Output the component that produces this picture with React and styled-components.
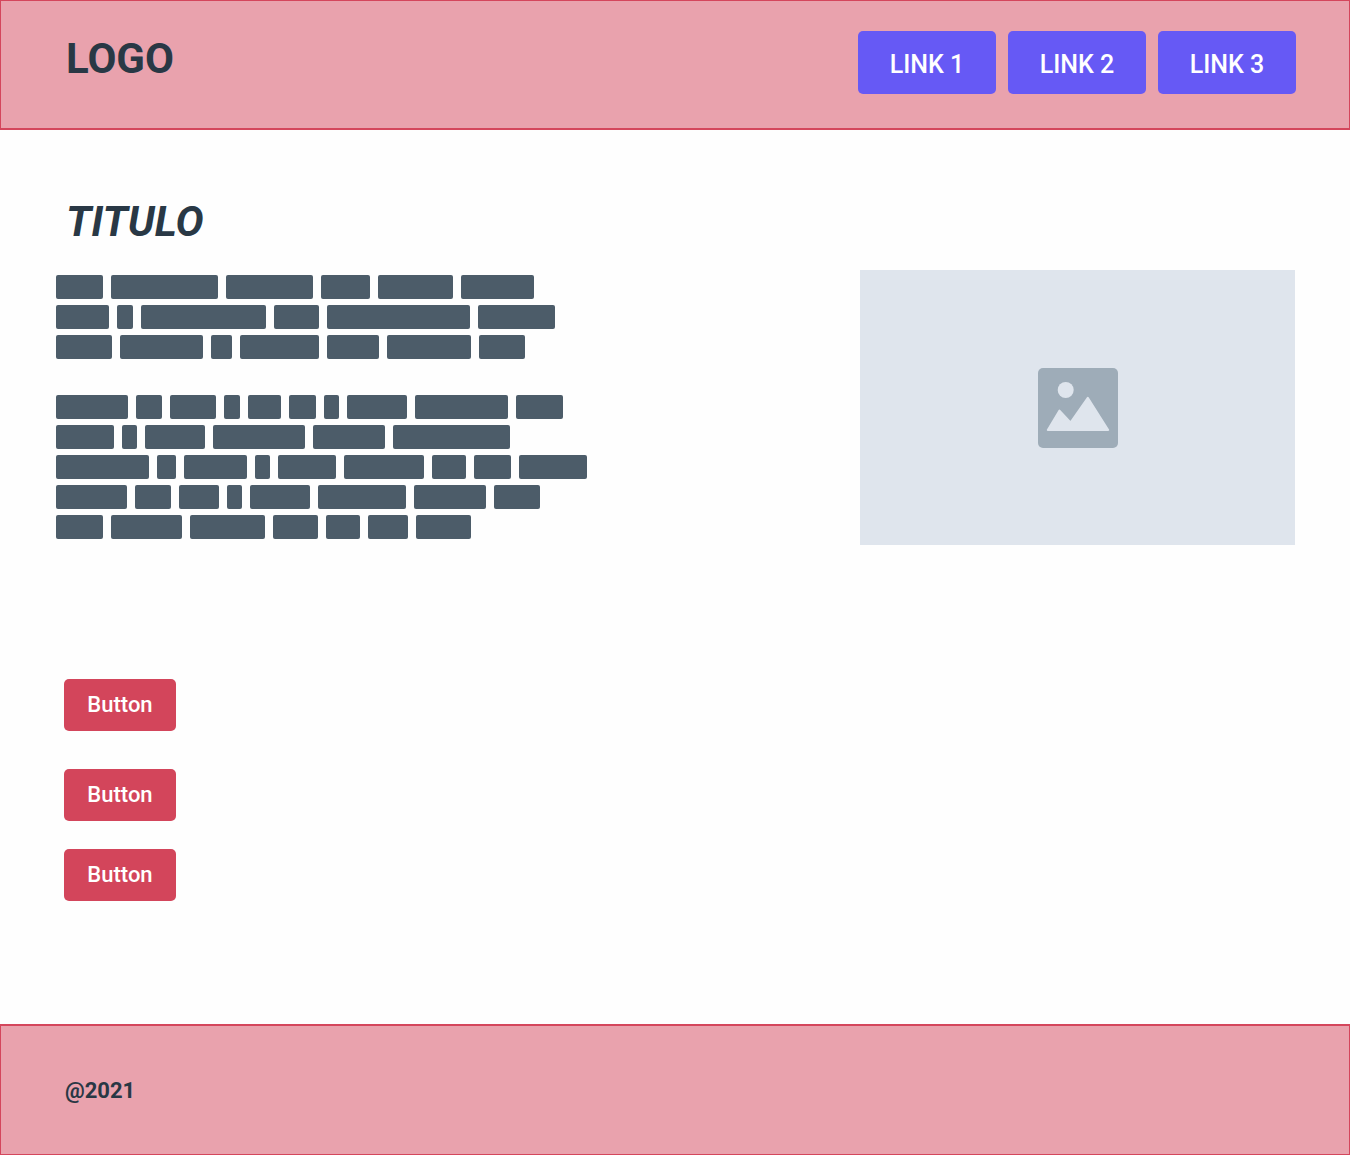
import React from "react";
import styled, { createGlobalStyle } from "styled-components";

const GlobalStyle = createGlobalStyle`
  *, *::before, *::after { box-sizing: border-box; }
  body {
    margin: 0;
    background: #fefefe;
    color: #293845;
    font-family: Roboto, "Open Sans", sans-serif;
  }
`;

const Page = styled.div`
  display: flex;
  flex-direction: column;
  min-height: 100vh;
`;

const Header = styled.header`
  display: flex;
  flex-wrap: wrap;
  align-items: flex-start;
  justify-content: space-between;
  gap: 12px;
  padding: 30px 53px 34px 65px;
  background: #e9a2ad;
  border: 1px solid #d4465c;
  border-bottom-width: 2px;
`;

const Logo = styled.span`
  font-size: 42px;
  line-height: 56px;
  font-weight: 700;
`;

const Nav = styled.nav`
  display: flex;
  flex-wrap: wrap;
  gap: 12px;
`;

const NavLink = styled.a`
  display: flex;
  align-items: center;
  justify-content: center;
  min-width: 138px;
  padding: 19px 24px 14px;
  border-radius: 5px;
  background: #6659f5;
  color: #ffffff;
  font-size: 25px;
  line-height: 30px;
  font-weight: 500;
  text-decoration: none;
`;

const Main = styled.main`
  flex: 1;
  padding: 68px 55px 64px 56px;
`;

const Title = styled.h1`
  margin: 0 0 24px;
  padding-left: 10px;
  font-size: 42px;
  line-height: 48px;
  font-weight: 700;
  font-style: italic;
`;

const Intro = styled.section`
  display: flex;
  flex-wrap: wrap;
  align-items: flex-start;
  justify-content: space-between;
  gap: 24px;
`;

const Copy = styled.div`
  display: grid;
  gap: 36px;
  padding-top: 5px;
`;

const Paragraph = styled.div`
  display: grid;
  gap: 6px;
`;

const Line = styled.div`
  display: flex;
  gap: 8px;
`;

const Word = styled.span`
  height: 24px;
  border-radius: 2px;
  background: #4c5c69;
`;

const Picture = styled.div`
  display: flex;
  align-items: center;
  justify-content: center;
  width: 435px;
  max-width: 100%;
  height: 275px;
  background: #dfe5ed;
`;

const Actions = styled.div`
  display: flex;
  flex-direction: column;
  align-items: flex-start;
  gap: 28px;
  padding: 134px 8px 0;
`;

const Button = styled.button`
  min-width: 112px;
  margin: 0 0 ${(p) => (p.$spaced ? "10px" : "0")};
  padding: 12px 16px;
  border: 0;
  border-radius: 5px;
  background: #d3455b;
  color: #ffffff;
  font-family: inherit;
  font-size: 22px;
  line-height: 28px;
  font-weight: 500;
`;

const Footer = styled.footer`
  padding: 51px 64px 49px;
  background: #e9a2ad;
  border: 1px solid #d4465c;
  border-top-width: 2px;
  font-size: 22px;
  line-height: 28px;
  font-weight: 700;
`;

const links = ["LINK 1", "LINK 2", "LINK 3"];

// Word widths of each placeholder line, grouped by paragraph.
const paragraphs = [
  [
    [47, 107, 87, 49, 75, 73],
    [53, 16, 125, 45, 143, 77],
    [56, 83, 21, 79, 52, 84, 46],
  ],
  [
    [72, 26, 46, 16, 33, 27, 15, 60, 93, 47],
    [58, 15, 60, 92, 72, 117],
    [93, 19, 63, 15, 58, 80, 34, 37, 68],
    [71, 36, 40, 15, 60, 88, 72, 46],
    [47, 71, 75, 45, 34, 40, 55],
  ],
];

function ImageIcon() {
  return (
    <svg width="80" height="80" viewBox="0 0 80 80" aria-hidden="true">
      <rect width="80" height="80" rx="5" fill="#9eacb8" />
      <g fill="#dfe5ed">
        <circle cx="27.7" cy="22" r="8" />
        <path
          d="M9.800 62 21.500 42.600 32.500 54.500 49.800 29.800 70.200 62Z"
          stroke="#dfe5ed"
          strokeWidth="2"
          strokeLinejoin="round"
        />
      </g>
    </svg>
  );
}

export default function App() {
  return (
    <Page>
      <GlobalStyle />
      <Header>
        <Logo>LOGO</Logo>
        <Nav>
          {links.map((label) => (
            <NavLink key={label} href="#">
              {label}
            </NavLink>
          ))}
        </Nav>
      </Header>
      <Main>
        <Title>TITULO</Title>
        <Intro>
          <Copy aria-hidden="true">
            {paragraphs.map((lines, i) => (
              <Paragraph key={i}>
                {lines.map((words, j) => (
                  <Line key={j}>
                    {words.map((width, k) => (
                      <Word key={k} style={{ width }} />
                    ))}
                  </Line>
                ))}
              </Paragraph>
            ))}
          </Copy>
          <Picture>
            <ImageIcon />
          </Picture>
        </Intro>
        <Actions>
          <Button type="button" $spaced>
            Button
          </Button>
          <Button type="button">Button</Button>
          <Button type="button">Button</Button>
        </Actions>
      </Main>
      <Footer>@2021</Footer>
    </Page>
  );
}
